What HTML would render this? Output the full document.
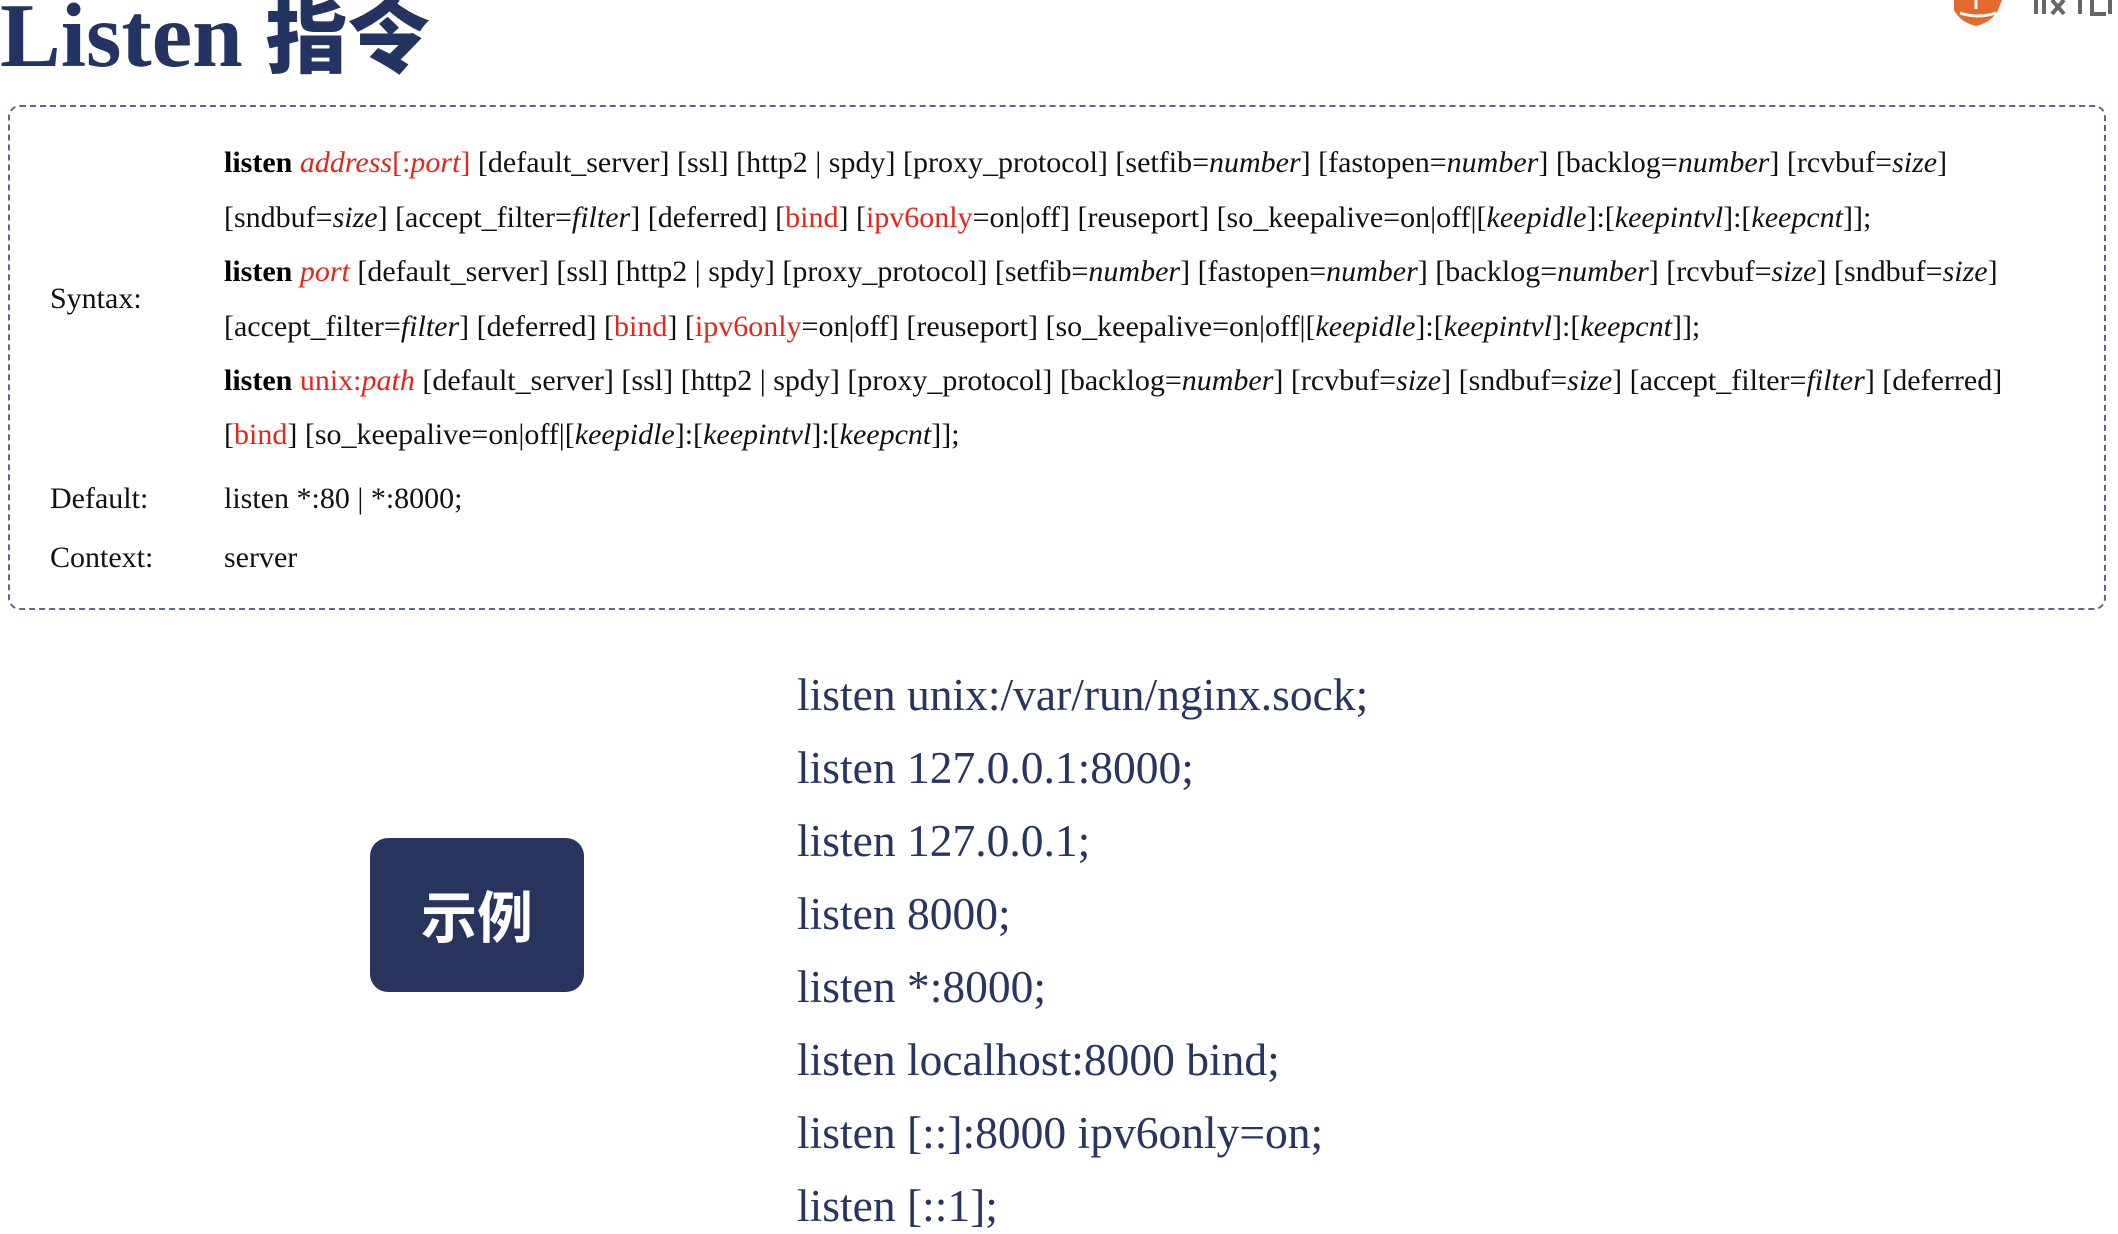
<!DOCTYPE html>
<html><head><meta charset="utf-8"><style>
html,body{margin:0;padding:0;background:#fff;width:2118px;height:1234px;overflow:hidden;position:relative}
.t{position:absolute;white-space:nowrap;font-family:"Liberation Serif","Noto Serif CJK SC",serif;color:#111;font-size:30px;line-height:1}
.r{color:#e0261d}
b{font-weight:bold;color:#000}
.ex{position:absolute;left:797px;white-space:nowrap;font-family:"Liberation Serif",serif;font-size:45.5px;color:#27355f;line-height:1}
</style></head><body>
<div style="position:absolute;left:0;top:-10px;font-family:'Liberation Serif','Noto Sans CJK SC',serif;font-weight:bold;font-size:91px;color:#233462;line-height:1;white-space:nowrap">Listen <span style="font-family:'Noto Sans CJK SC',sans-serif;font-weight:900;font-size:82px">指令</span></div>
<svg style="position:absolute;left:1940px;top:0" width="178" height="30">
<path d="M14 0 L62 0 L58 10 Q52 22 36 26 Q20 22 14 10 Z" fill="#e4692c"/>
<path d="M20 13 Q38 19 56 13" stroke="#fff" stroke-width="3" fill="none"/>
<path d="M36 0 L36 9" stroke="#fff" stroke-width="3"/>
<path d="M96 0 L96 14 M104 0 L104 14 M112 0 L124 14 M124 0 L112 14 M140 0 L140 14 M152 0 L152 14 L166 14 M170 0 L170 14" stroke="#666" stroke-width="4" fill="none"/>
</svg>
<div style="position:absolute;left:8px;top:105px;width:2094px;height:501px;border:2px dashed #5b6790;border-radius:12px"></div>
<div class="t" style="left:50px;top:284px">Syntax:</div>
<div class="t" style="left:224px;top:148px"><b>listen</b> <i class="r">address</i><span class="r">[:<i>port</i>]</span> [default_server] [ssl] [http2 | spdy] [proxy_protocol] [setfib=<i>number</i>] [fastopen=<i>number</i>] [backlog=<i>number</i>] [rcvbuf=<i>size</i>]</div>
<div class="t" style="left:224px;top:203px">[sndbuf=<i>size</i>] [accept_filter=<i>filter</i>] [deferred] [<span class="r">bind</span>] [<span class="r">ipv6only</span>=on|off] [reuseport] [so_keepalive=on|off|[<i>keepidle</i>]:[<i>keepintvl</i>]:[<i>keepcnt</i>]];</div>
<div class="t" style="left:224px;top:257px"><b>listen</b> <i class="r">port</i> [default_server] [ssl] [http2 | spdy] [proxy_protocol] [setfib=<i>number</i>] [fastopen=<i>number</i>] [backlog=<i>number</i>] [rcvbuf=<i>size</i>] [sndbuf=<i>size</i>]</div>
<div class="t" style="left:224px;top:312px">[accept_filter=<i>filter</i>] [deferred] [<span class="r">bind</span>] [<span class="r">ipv6only</span>=on|off] [reuseport] [so_keepalive=on|off|[<i>keepidle</i>]:[<i>keepintvl</i>]:[<i>keepcnt</i>]];</div>
<div class="t" style="left:224px;top:366px"><b>listen</b> <span class="r">unix:<i>path</i></span> [default_server] [ssl] [http2 | spdy] [proxy_protocol] [backlog=<i>number</i>] [rcvbuf=<i>size</i>] [sndbuf=<i>size</i>] [accept_filter=<i>filter</i>] [deferred]</div>
<div class="t" style="left:224px;top:420px">[<span class="r">bind</span>] [so_keepalive=on|off|[<i>keepidle</i>]:[<i>keepintvl</i>]:[<i>keepcnt</i>]];</div>
<div class="t" style="left:50px;top:484px">Default:</div>
<div class="t" style="left:224px;top:484px">listen *:80 | *:8000;</div>
<div class="t" style="left:50px;top:543px">Context:</div>
<div class="t" style="left:224px;top:543px">server</div>
<div style="position:absolute;left:370px;top:838px;width:214px;height:154px;background:#26345e;border-radius:18px;color:#fff;font-family:'Noto Sans CJK SC',sans-serif;font-weight:bold;font-size:56px;line-height:154px;text-align:center">示例</div>
<div class="ex" style="top:672px">listen unix:/var/run/nginx.sock;</div>
<div class="ex" style="top:745px">listen 127.0.0.1:8000;</div>
<div class="ex" style="top:818px">listen 127.0.0.1;</div>
<div class="ex" style="top:891px">listen 8000;</div>
<div class="ex" style="top:964px">listen *:8000;</div>
<div class="ex" style="top:1037px">listen localhost:8000 bind;</div>
<div class="ex" style="top:1110px">listen [::]:8000 ipv6only=on;</div>
<div class="ex" style="top:1183px">listen [::1];</div>
</body></html>
